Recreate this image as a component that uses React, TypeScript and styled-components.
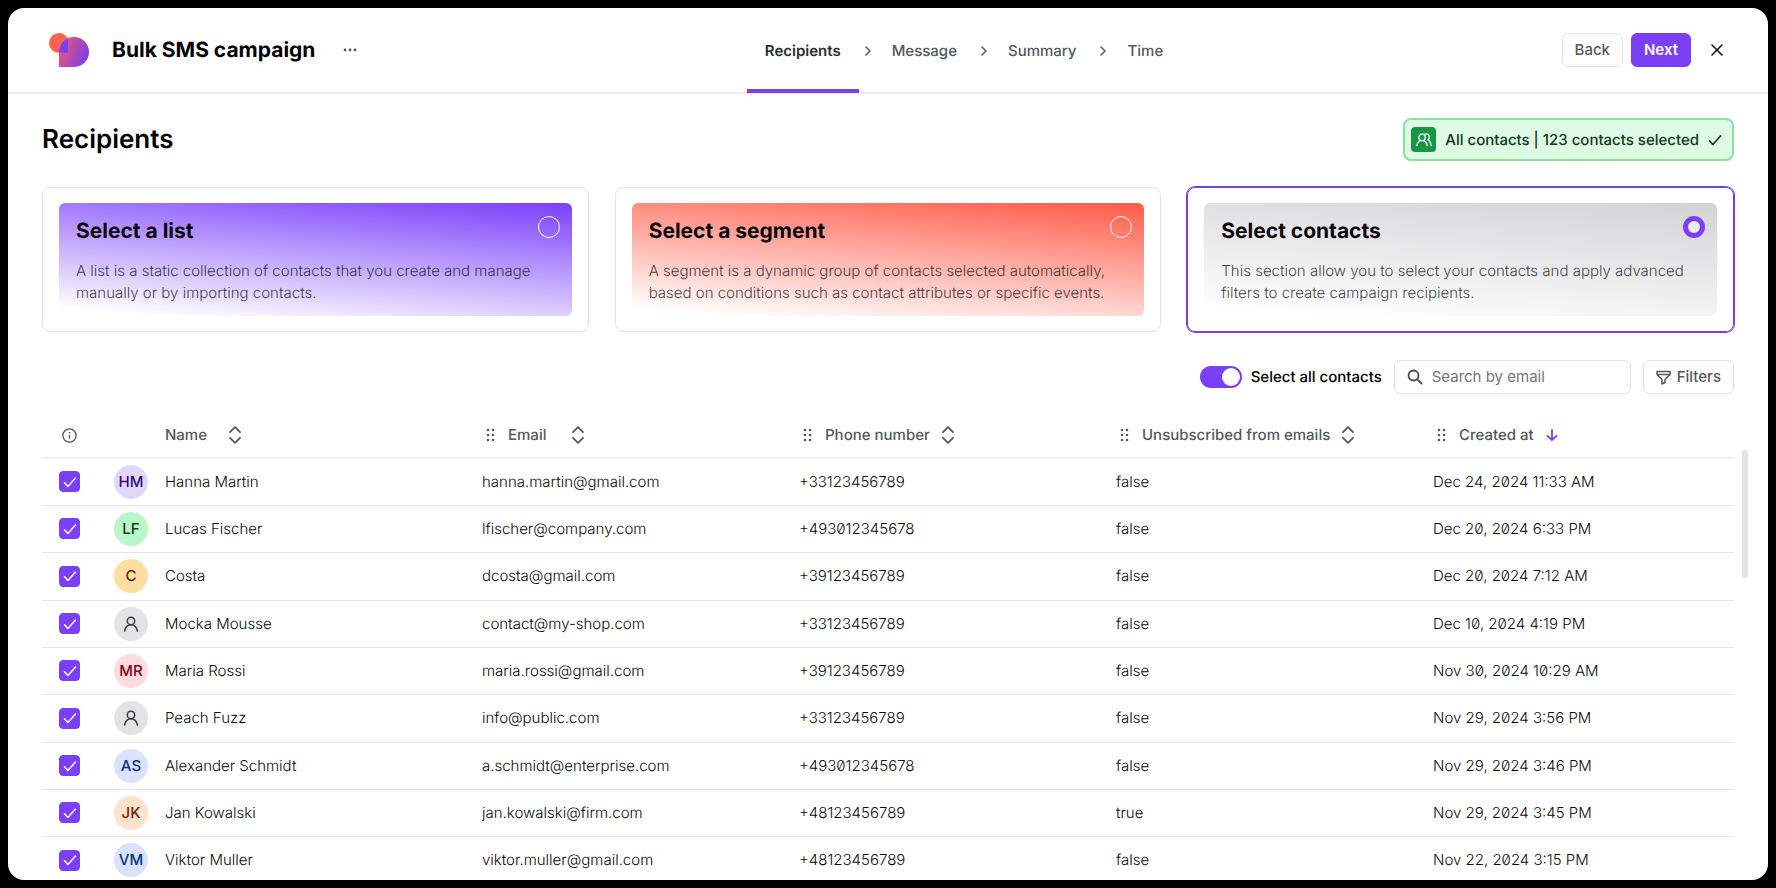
import React from "react";
import styled, { createGlobalStyle, css } from "styled-components";

const color = {
  violet: "#7b3ff8",
  ink: "#0c0c0f",
  text: "#2b2c31",
  muted: "#55575e",
  line: "#e4e4e6",
};

const GlobalStyle = createGlobalStyle`
  *, *::before, *::after { box-sizing: border-box; }
  body {
    margin: 0;
    background: #000;
    color: ${color.text};
    font-family: Inter, "Liberation Sans", sans-serif;
    font-size: 15px;
    line-height: 22px;
    text-rendering: geometricPrecision;
  }
  button, input { font: inherit; color: inherit; }
`;

const Page = styled.div`
  height: 100vh;
  min-height: 480px;
  padding: 8px;
  background: #000;
`;

const Panel = styled.div`
  display: flex;
  flex-direction: column;
  height: 100%;
  overflow: hidden;
  border-radius: 16px;
  background: #fff;
`;

const Header = styled.header`
  display: flex;
  flex: none;
  justify-content: space-between;
  height: 86px;
  padding: 0 35px 0 34px;
  border-bottom: 2px solid #efeff0;
`;

const Brand = styled.div`
  display: flex;
  align-items: center;
  padding-left: 7px;
`;

const CampaignTitle = styled.h1`
  margin: 0 19px 0 23px;
  padding-top: 2px;
  color: #000;
  font-size: 21px;
  line-height: 28px;
  font-weight: 700;
`;

const IconButton = styled.button`
  display: grid;
  place-items: center;
  width: 32px;
  height: 34px;
  padding: 0;
  border: 0;
  background: none;
  color: ${color.ink};
`;

const Steps = styled.nav`
  display: flex;
  margin-bottom: -1px;
`;

const Step = styled.a<{ $active?: boolean }>`
  display: flex;
  align-items: center;
  padding: 4px 18px 0;
  border-bottom: 4px solid ${(p) => (p.$active ? "#7a42e8" : "transparent")};
  color: ${(p) => (p.$active ? color.text : color.muted)};
  font-weight: ${(p) => (p.$active ? 600 : 500)};
  text-decoration: none;
`;

const StepArrow = styled.svg`
  align-self: center;
  margin: 0 2px 0 5px;
  color: ${color.muted};
`;

const HeaderActions = styled.div`
  display: flex;
  align-items: center;
`;

const Button = styled.button<{ $primary?: boolean }>`
  display: inline-flex;
  align-items: center;
  gap: 6px;
  height: 34px;
  padding: 0 12px;
  border: 1px solid ${(p) => (p.$primary ? color.violet : color.line)};
  border-radius: 6px;
  background: ${(p) => (p.$primary ? color.violet : "#fff")};
  color: ${(p) => (p.$primary ? "#fff" : color.muted)};
  font-weight: ${(p) => (p.$primary ? 600 : 500)};
  & + & { margin-left: 8px; }
  & + ${IconButton} { margin-left: 10px; }
`;

const Main = styled.main`
  display: flex;
  flex: 1;
  flex-direction: column;
  min-height: 0;
  padding: 24px 34px 0;
`;

const TitleRow = styled.div`
  display: flex;
  align-items: center;
  justify-content: space-between;
`;

const PageTitle = styled.h2`
  margin: 0;
  color: #000;
  font-size: 26px;
  line-height: 32px;
  font-weight: 600;
`;

const SelectionBadge = styled.div`
  display: flex;
  align-items: center;
  gap: 9px;
  height: 43px;
  padding: 0 10px 0 6px;
  border: 2px solid #85e49f;
  border-radius: 8px;
  background: #dffae4;
  color: #0d3a1b;
  font-weight: 500;
`;

const BadgeIcon = styled.span`
  display: grid;
  place-items: center;
  width: 25px;
  height: 25px;
  border-radius: 4px;
  background: #1a9547;
  color: #fff;
`;

const Options = styled.div`
  display: grid;
  grid-template-columns: repeat(3, 1fr);
  gap: 26px;
  margin-top: 26px;
`;

const OptionCard = styled.label<{ $selected?: boolean }>`
  display: block;
  padding: 15px 16px;
  border: 1px solid ${(p) => (p.$selected ? "#7442dc" : color.line)};
  border-radius: 8px;
  ${(p) => p.$selected && css`box-shadow: 0 0 0 1px #7442dc;`}
`;

const OptionFill = styled.span<{ $tint: string }>`
  display: block;
  min-height: 113px;
  padding: 13px 12px 12px 17px;
  border-radius: 6px;
  background: linear-gradient(185deg, ${(p) => p.$tint});
`;

const OptionHead = styled.span`
  display: flex;
  justify-content: space-between;
  margin-bottom: 12px;
`;

const OptionTitle = styled.span`
  color: #08080a;
  font-size: 21px;
  line-height: 32px;
  font-weight: 700;
`;

const OptionText = styled.span`
  display: block;
  color: rgba(20, 20, 26, 0.82);
  font-weight: 300;
`;

const Radio = styled.input`
  flex: none;
  width: 22px;
  height: 22px;
  margin: 0;
  border: 1px solid #fff;
  border-radius: 50%;
  appearance: none;
  &:checked {
    border: 5px solid ${color.violet};
    background: #ececee;
  }
`;

const Toolbar = styled.div`
  display: flex;
  align-items: center;
  justify-content: flex-end;
  gap: 12px;
  margin-top: 28px;
`;

const SwitchLabel = styled.label`
  display: flex;
  align-items: center;
  gap: 9px;
  color: #000;
  font-weight: 500;
`;

const Switch = styled.input`
  display: flex;
  align-items: center;
  width: 42px;
  height: 22px;
  margin: 0;
  padding: 2px;
  border-radius: 11px;
  background: #c8c8cc;
  appearance: none;
  &::before {
    content: "";
    width: 18px;
    height: 18px;
    border-radius: 50%;
    background: #fff;
  }
  &:checked { background: ${color.violet}; justify-content: flex-end; }
`;

const SearchBox = styled.label`
  display: flex;
  align-items: center;
  gap: 9px;
  width: 237px;
  height: 34px;
  padding: 0 12px;
  border: 1px solid ${color.line};
  border-radius: 6px;
  color: #4a4b52;
`;

const SearchInput = styled.input`
  flex: 1;
  min-width: 0;
  padding: 0;
  border: 0;
  outline: 0;
  background: none;
  &::placeholder { color: #73757d; opacity: 1; }
`;

const TableArea = styled.div`
  display: flex;
  flex: 1;
  align-items: flex-start;
  gap: 8px;
  min-height: 0;
  margin: 19px -14px 0 0;
  overflow: hidden;
`;

const ContactsTable = styled.table`
  flex: 1;
  table-layout: fixed;
  width: 100%;
  border-collapse: collapse;
`;

const CheckCol = styled.col`
  width: 56px;
`;

const NameCol = styled.col`
  width: 368px;
`;

const HeadCell = styled.th<{ $inset: number }>`
  height: 45px;
  padding: 0 0 0 ${(p) => p.$inset}px;
  border-bottom: 2px solid #efeff0;
  color: ${color.muted};
  font-weight: 500;
  text-align: left;
  white-space: nowrap;
`;

const HeadInner = styled.div`
  display: flex;
  align-items: center;
`;

const DragDots = styled.svg`
  margin-right: 13px;
`;

const HeadLabel = styled.span`
  min-width: 52px;
  margin-right: 12px;
`;

const Row = styled.tr`
  height: 47px;
  &:nth-child(3n) { height: 48px; }
`;

const Cell = styled.td`
  padding: 0 0 0 16px;
  border-bottom: 1px solid ${color.line};
  color: ${color.ink};
  font-weight: 300;
  font-feature-settings: "zero" 1;
  white-space: nowrap;
`;

const NameCell = styled.div`
  display: flex;
  align-items: center;
  gap: 17px;
`;

const Avatar = styled.span<{ $bg: string; $fg: string }>`
  display: grid;
  place-items: center;
  width: 34px;
  height: 34px;
  border-radius: 50%;
  background: ${(p) => p.$bg};
  color: ${(p) => p.$fg};
  font-weight: 500;
`;

const CheckBox = styled.span`
  display: grid;
  width: 21px;
  height: 21px;
  margin-left: 1px;
  color: #fff;
  & > * { grid-area: 1 / 1; }
`;

const CheckInput = styled.input`
  width: 21px;
  height: 21px;
  margin: 0;
  border: 1px solid #b5b5ba;
  border-radius: 4px;
  appearance: none;
  &:checked { border-color: ${color.violet}; background: ${color.violet}; }
`;

const CheckMark = styled.span`
  display: grid;
  place-self: center;
  pointer-events: none;
`;

const ScrollThumb = styled.div`
  flex: none;
  width: 6px;
  height: 128px;
  margin-top: 37px;
  border-radius: 3px;
  background: #e4e4e6;
`;

const Logo = () => (
  <svg width="40" height="35" viewBox="0 0 40 35" aria-hidden="true">
    <defs>
      <linearGradient id="logoShade" x1="12" y1="14" x2="38" y2="24" gradientUnits="userSpaceOnUse">
        <stop offset="0" stopColor="#e4557a" />
        <stop offset="1" stopColor="#7f3fe8" />
      </linearGradient>
    </defs>
    <circle cx="10" cy="10" r="10" fill="#ff6250" />
    <path d="M10 34V19A15 15 0 1 1 25 34Z" fill="url(#logoShade)" />
    <path d="M10 19.500A15 15 0 0 1 19 5.200V19.500Z" fill="#7b3ffb" />
  </svg>
);

const Tick = ({ size, weight = 1.7 }: { size: number; weight?: number }) => (
  <svg width={size} height={size} viewBox="0 0 14 14" fill="none" stroke="currentColor" strokeWidth={weight} strokeLinecap="round" strokeLinejoin="round" aria-hidden="true">
    <path d="M1.500 7.800l3.400 3.700L12.500 3" />
  </svg>
);

const SortIcon = () => (
  <svg width="12" height="18" viewBox="0 0 12 18" fill="none" stroke="currentColor" strokeWidth="1.800" strokeLinecap="round" strokeLinejoin="round" aria-hidden="true">
    <path d="M1 6.200L6 1.200l5 5M1 11.800l5 5 5-5" />
  </svg>
);

const ArrowDown = () => (
  <svg width="12" height="14" viewBox="0 0 12 14" fill="none" stroke="#7b3fe8" strokeWidth="1.800" strokeLinecap="round" strokeLinejoin="round" aria-hidden="true">
    <path d="M6 2v10M1.500 7.800L6 12.200l4.500-4.400" />
  </svg>
);

const Dots = () => (
  <DragDots width="9" height="14" viewBox="0 0 9 14" fill="currentColor" aria-hidden="true">
    {[2, 7, 12].map((y) => (
      <React.Fragment key={y}>
        <circle cx="2" cy={y} r="1.300" />
        <circle cx="7" cy={y} r="1.300" />
      </React.Fragment>
    ))}
  </DragDots>
);

const Person = () => (
  <svg width="16" height="16" viewBox="0 0 16 16" fill="none" stroke="currentColor" strokeWidth="1.500" strokeLinecap="round" aria-hidden="true">
    <circle cx="8" cy="5" r="3.700" />
    <path d="M1.600 15c.7-3.600 3-6.300 6.400-6.300s5.700 2.700 6.400 6.300" />
  </svg>
);

const People = () => (
  <svg width="18" height="16" viewBox="0 0 18 16" fill="none" stroke="currentColor" strokeWidth="1.300" strokeLinecap="round" strokeLinejoin="round" aria-hidden="true">
    <circle cx="7" cy="5.400" r="3.200" />
    <path d="M1.800 13.600c.5-2.800 2.400-5 5.200-5s4.700 2.200 5.200 5" />
    <path d="M10 2.200a3.200 3.200 0 0 1 3 5.600c1.800 1.100 2.900 3.300 3.200 5.800" />
  </svg>
);

const steps = ["Recipients", "Message", "Summary", "Time"];

const options = [
  {
    title: "Select a list",
    text: "A list is a static collection of contacts that you create and manage manually or by importing contacts.",
    tint: "#7b3ffc 0%, #ffffff 95%",
  },
  {
    title: "Select a segment",
    text: "A segment is a dynamic group of contacts selected automatically, based on conditions such as contact attributes or specific events.",
    tint: "#ff5b49 0%, #ffffff 95%",
  },
  {
    title: "Select contacts",
    text: "This section allow you to select your contacts and apply advanced filters to create campaign recipients.",
    tint: "#d3d2d5 0%, #ffffff 95%",
    selected: true,
  },
];

const violetTone = ["#e1d9fd", "#35087d"];
const greenTone = ["#bbf6cb", "#0c4420"];
const amberTone = ["#ffdf9f", "#5a2500"];
const greyTone = ["#e3e3e5", "#3c3d42"];
const redTone = ["#ffdbe0", "#7c0717"];
const blueTone = ["#dbe2ff", "#05357c"];
const orangeTone = ["#ffe3cf", "#741b05"];

const contacts = [
  { initials: "HM", tone: violetTone, name: "Hanna Martin", email: "hanna.martin@gmail.com", phone: "+33123456789", unsub: "false", created: "Dec 24, 2024 11:33 AM" },
  { initials: "LF", tone: greenTone, name: "Lucas Fischer", email: "lfischer@company.com", phone: "+493012345678", unsub: "false", created: "Dec 20, 2024 6:33 PM" },
  { initials: "C", tone: amberTone, name: "Costa", email: "dcosta@gmail.com", phone: "+39123456789", unsub: "false", created: "Dec 20, 2024 7:12 AM" },
  { initials: "", tone: greyTone, name: "Mocka Mousse", email: "contact@my-shop.com", phone: "+33123456789", unsub: "false", created: "Dec 10, 2024 4:19 PM" },
  { initials: "MR", tone: redTone, name: "Maria Rossi", email: "maria.rossi@gmail.com", phone: "+39123456789", unsub: "false", created: "Nov 30, 2024 10:29 AM" },
  { initials: "", tone: greyTone, name: "Peach Fuzz", email: "info@public.com", phone: "+33123456789", unsub: "false", created: "Nov 29, 2024 3:56 PM" },
  { initials: "AS", tone: blueTone, name: "Alexander Schmidt", email: "a.schmidt@enterprise.com", phone: "+493012345678", unsub: "false", created: "Nov 29, 2024 3:46 PM" },
  { initials: "JK", tone: orangeTone, name: "Jan Kowalski", email: "jan.kowalski@firm.com", phone: "+48123456789", unsub: "true", created: "Nov 29, 2024 3:45 PM" },
  { initials: "VM", tone: blueTone, name: "Viktor Muller", email: "viktor.muller@gmail.com", phone: "+48123456789", unsub: "false", created: "Nov 22, 2024 3:15 PM" },
];

export default function App() {
  return (
    <>
      <GlobalStyle />
      <Page>
        <Panel>
          <Header>
            <Brand>
              <Logo />
              <CampaignTitle>Bulk SMS campaign</CampaignTitle>
              <IconButton type="button" aria-label="More actions">
                <svg width="14" height="4" viewBox="0 0 14 4" fill={color.muted} aria-hidden="true">
                  <circle cx="2" cy="2" r="1.400" />
                  <circle cx="7" cy="2" r="1.400" />
                  <circle cx="12" cy="2" r="1.400" />
                </svg>
              </IconButton>
            </Brand>
            <Steps aria-label="Campaign steps">
              {steps.map((step, i) => (
                <React.Fragment key={step}>
                  {i > 0 && (
                    <StepArrow width="8" height="10" viewBox="0 0 8 10" fill="none" stroke="currentColor" strokeWidth="1.500" strokeLinecap="round" strokeLinejoin="round" aria-hidden="true">
                      <path d="M2 1l4 4-4 4" />
                    </StepArrow>
                  )}
                  <Step href={`#${step.toLowerCase()}`} $active={i === 0}>{step}</Step>
                </React.Fragment>
              ))}
            </Steps>
            <HeaderActions>
              <Button type="button">Back</Button>
              <Button type="button" $primary>Next</Button>
              <IconButton type="button" aria-label="Close">
                <svg width="12" height="12" viewBox="0 0 12 12" fill="none" stroke="currentColor" strokeWidth="1.500" strokeLinecap="round" aria-hidden="true">
                  <path d="M1 1l10 10M11 1L1 11" />
                </svg>
              </IconButton>
            </HeaderActions>
          </Header>
          <Main>
            <TitleRow>
              <PageTitle>Recipients</PageTitle>
              <SelectionBadge>
                <BadgeIcon><People /></BadgeIcon>
                <span>All contacts | 123 contacts selected</span>
                <Tick size={14} />
              </SelectionBadge>
            </TitleRow>
            <Options>
              {options.map((o) => (
                <OptionCard key={o.title} $selected={o.selected}>
                  <OptionFill $tint={o.tint}>
                    <OptionHead>
                      <OptionTitle>{o.title}</OptionTitle>
                      <Radio type="radio" name="source" defaultChecked={o.selected} />
                    </OptionHead>
                    <OptionText>{o.text}</OptionText>
                  </OptionFill>
                </OptionCard>
              ))}
            </Options>
            <Toolbar>
              <SwitchLabel>
                <Switch type="checkbox" role="switch" defaultChecked />
                Select all contacts
              </SwitchLabel>
              <SearchBox>
                <svg width="16" height="16" viewBox="0 0 16 16" fill="none" stroke="currentColor" strokeWidth="1.800" strokeLinecap="round" aria-hidden="true">
                  <circle cx="6.500" cy="6.500" r="5" />
                  <path d="M10.300 10.300L14.500 14.500" />
                </svg>
                <SearchInput type="text" placeholder="Search by email" aria-label="Search by email" />
              </SearchBox>
              <Button type="button">
                <svg width="15" height="15" viewBox="0 0 15 15" fill="none" stroke="currentColor" strokeWidth="1.500" strokeLinejoin="round" aria-hidden="true">
                  <path d="M1 1.500h13v3L9 9.500V12.500L6 14V9.500L1 4.500Z" />
                  <path d="M1 4.500h13" />
                </svg>
                Filters
              </Button>
            </Toolbar>
            <TableArea>
              <ContactsTable>
                <colgroup>
                  <CheckCol />
                  <NameCol />
                  <col />
                  <col />
                  <col />
                  <col />
                </colgroup>
                <thead>
                  <tr>
                    <HeadCell $inset={20} aria-label="Selected">
                      <HeadInner>
                        <svg width="15" height="15" viewBox="0 0 15 15" fill="none" stroke="currentColor" strokeWidth="1.300" aria-hidden="true">
                          <circle cx="7.500" cy="7.500" r="6.600" />
                          <path d="M7.500 6.700v4M7.500 4v1.400" />
                        </svg>
                      </HeadInner>
                    </HeadCell>
                    <HeadCell $inset={67}>
                      <HeadInner><HeadLabel>Name</HeadLabel><SortIcon /></HeadInner>
                    </HeadCell>
                    {["Email", "Phone number", "Unsubscribed from emails"].map((label) => (
                      <HeadCell key={label} $inset={20}>
                        <HeadInner><Dots /><HeadLabel>{label}</HeadLabel><SortIcon /></HeadInner>
                      </HeadCell>
                    ))}
                    <HeadCell $inset={20}>
                      <HeadInner><Dots /><HeadLabel>Created at</HeadLabel><ArrowDown /></HeadInner>
                    </HeadCell>
                  </tr>
                </thead>
                <tbody>
                  {contacts.map((c) => (
                    <Row key={c.name}>
                      <Cell>
                        <CheckBox>
                          <CheckInput type="checkbox" defaultChecked aria-label={`Select ${c.name}`} />
                          <CheckMark><Tick size={14} weight={1.5} /></CheckMark>
                        </CheckBox>
                      </Cell>
                      <Cell>
                        <NameCell>
                          <Avatar $bg={c.tone[0]} $fg={c.tone[1]}>{c.initials || <Person />}</Avatar>
                          {c.name}
                        </NameCell>
                      </Cell>
                      <Cell>{c.email}</Cell>
                      <Cell>{c.phone}</Cell>
                      <Cell>{c.unsub}</Cell>
                      <Cell>{c.created}</Cell>
                    </Row>
                  ))}
                </tbody>
              </ContactsTable>
              <ScrollThumb />
            </TableArea>
          </Main>
        </Panel>
      </Page>
    </>
  );
}
